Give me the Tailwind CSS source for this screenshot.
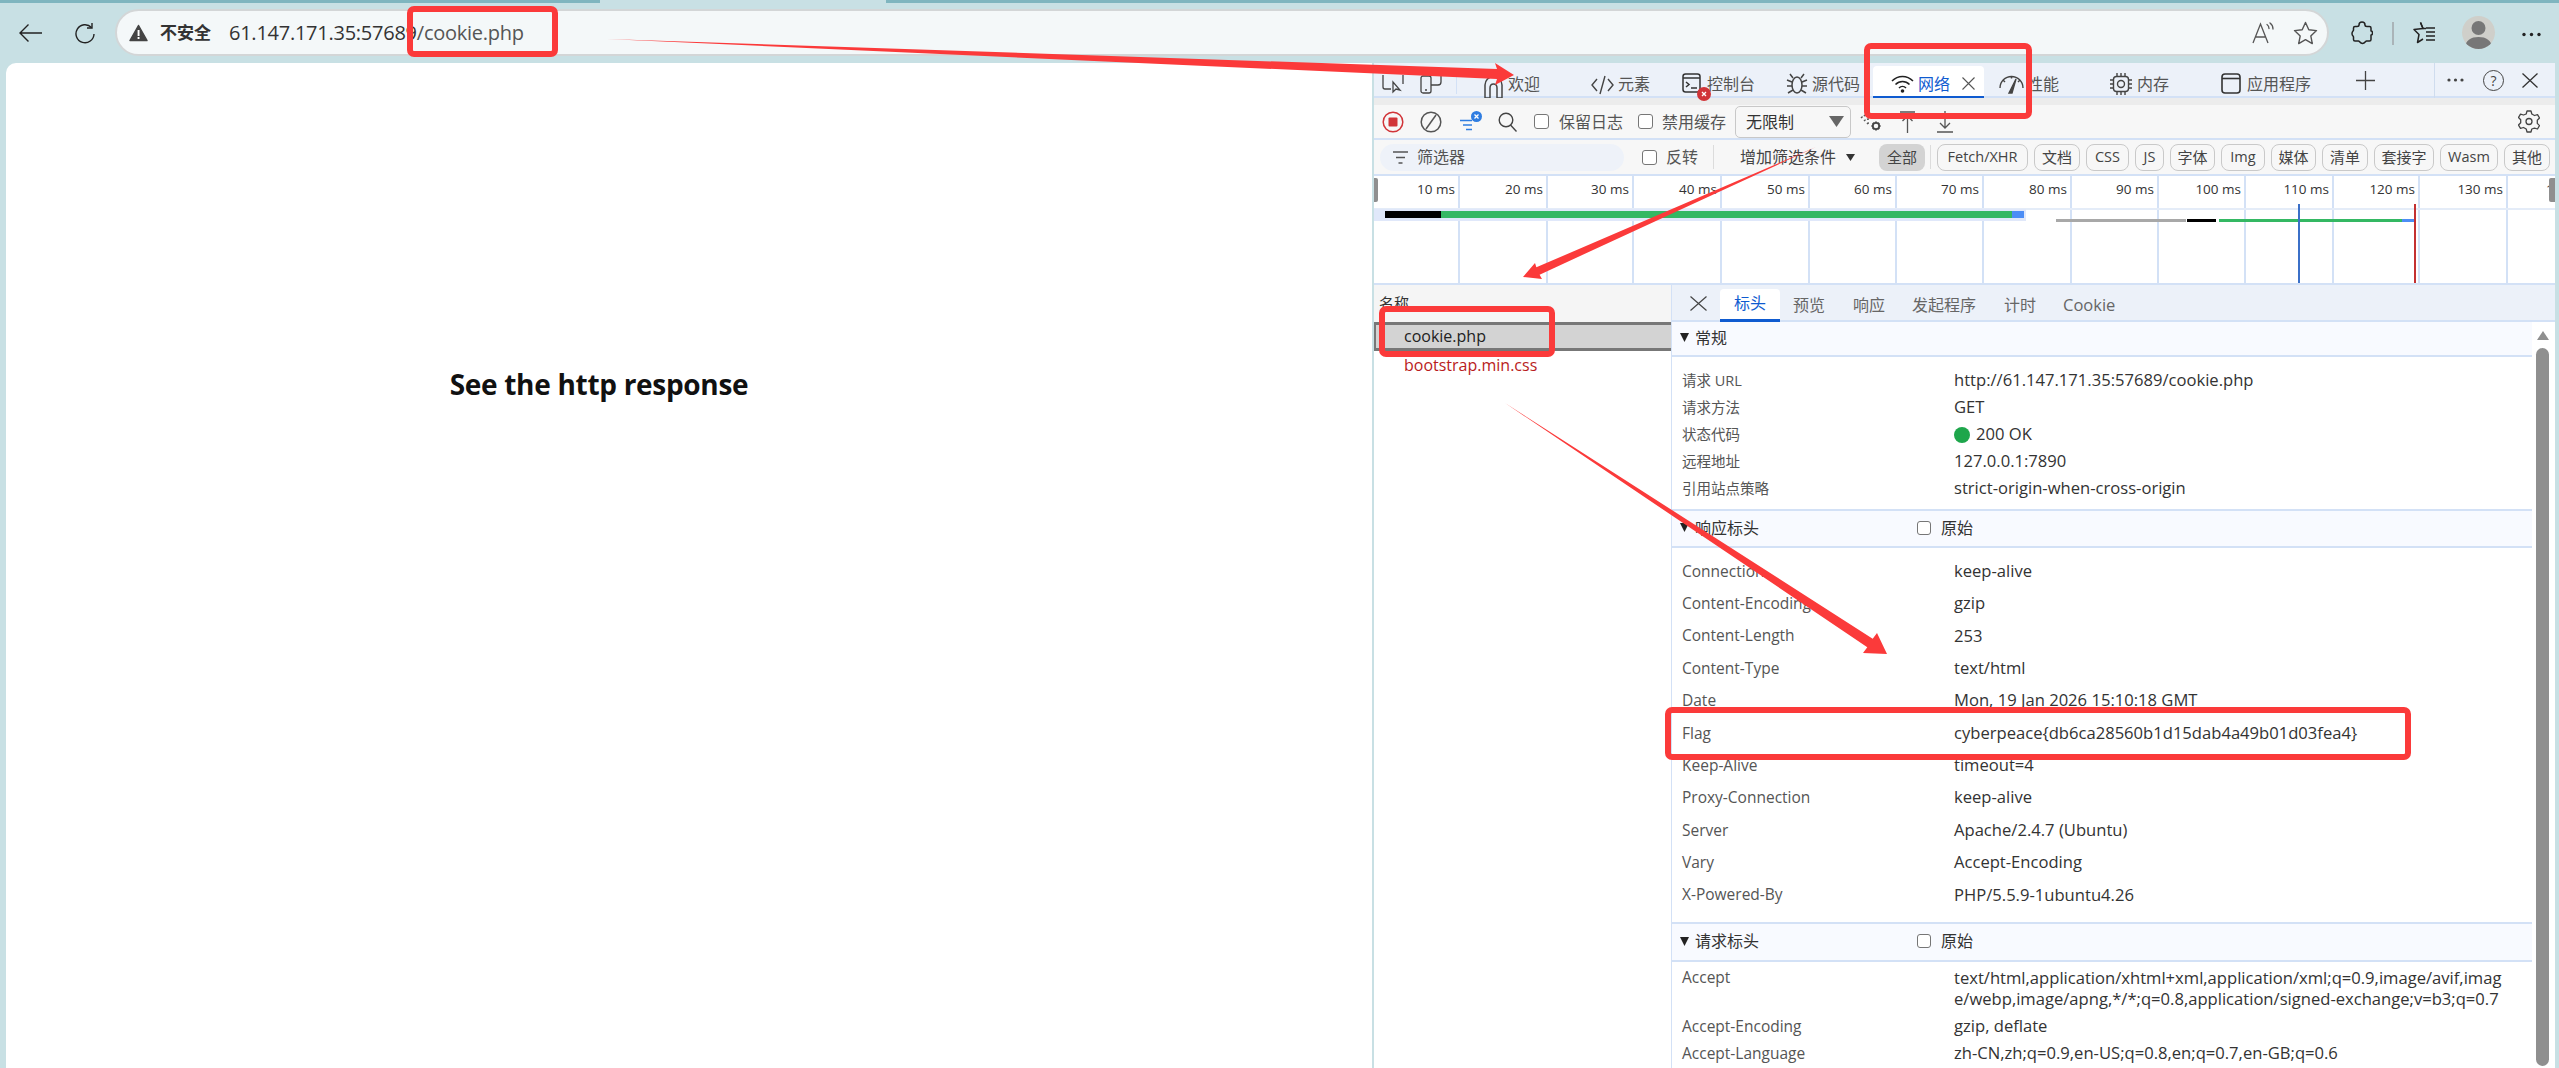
<!doctype html>
<html lang="zh-CN">
<head>
<meta charset="utf-8">
<title>cookie.php</title>
<script src="https://cdn.jsdelivr.net/npm/@tailwindcss/browser@4"></script>
</head>
<body class="m-0 overflow-hidden">
<div class="relative w-[2559px] h-[1068px] overflow-hidden flex flex-col bg-[#c8e0e4] font-['Open_Sans','Noto_Sans_CJK_SC',sans-serif] text-[#333]">

  <!-- browser chrome -->
  <div class="h-[3px] shrink-0 flex"><div class="w-[600px] bg-[#7fb5bf]"></div><div class="w-[286px]"></div><div class="flex-1 bg-[#7fb5bf]"></div></div>
  <div class="h-[60px] shrink-0 flex items-start">
    <button class="ml-[18px] mt-[20px] w-[24px] h-[20px]"><svg width="24" height="20" viewBox="0 0 24 20" fill="none" stroke="#222" stroke-width="1.4"><path d="M24 10H2M10.500 1.500 2 10l8.500 8.500"/></svg></button>
    <button class="ml-[32px] mt-[20px] w-[22px] h-[21px]"><svg width="22" height="21" viewBox="0 0 22 21" fill="none" stroke="#222" stroke-width="1.4"><path d="M17.500 4.500A9 9 0 1 0 20 11"/><path d="M18 0v5h-5"/></svg></button>
    <div class="ml-[19px] mt-[6px] w-[2214px] h-[47px] rounded-full bg-[#f4f8f9] border-2 border-[#d3d6d7] flex items-center">
      <svg class="ml-[12px]" width="19" height="18" viewBox="0 0 19 18"><path d="M9.500 1.500 18 16.500H1z" fill="#444" stroke="#444" stroke-width="1.500" stroke-linejoin="round"/><rect x="8.600" y="6" width="1.900" height="6" fill="#fff"/><rect x="8.600" y="13" width="1.900" height="2" fill="#fff"/></svg>
      <span class="ml-[12px] w-[52px] text-[17px] font-bold text-[#333] whitespace-nowrap">不安全</span>
      <span class="ml-[17px] text-[20px] tracking-[-0.25px] text-[#333] whitespace-nowrap">61.147.171.35:57689<span class="text-[#555]">/cookie.php</span></span>
      <svg class="ml-auto" width="24" height="22" viewBox="0 0 24 22" fill="none" stroke="#555" stroke-width="1.3"><path d="M1 21 8.500 2 16 21M3.500 15h10"/><path d="M15 2.500c1.500 1 2 2.500 2 4M18 1c2 1.500 3 3.500 3 6" stroke-linecap="round"/></svg>
      <svg class="ml-[17px] mr-[9px]" width="25" height="24" viewBox="0 0 25 24" fill="none" stroke="#555" stroke-width="1.400" stroke-linejoin="round"><path d="M12.500 1.500 15.800 8.700l7.700.9-5.700 5.300 1.500 7.700-6.800-3.900-6.800 3.900 1.500-7.700L1.500 9.600l7.700-.9z"/></svg>
    </div>
    <svg class="ml-[22px] mt-[18px]" width="22" height="24" viewBox="0 0 22 24" fill="none" stroke="#222" stroke-width="1.500" stroke-linejoin="round"><path d="M8 4c0-4 6-4 6 0 0 1 1 1.500 2 1.500h2.500c1 0 1.500.8 1.500 1.500v3c1.500 0 1.500 1 1.500 2s0 2-1.500 2v4.500c0 1-.5 1.500-1.500 1.500h-3c-1 0-1.500 2.500-4 2.500s-3-2.500-4-2.500H4c-1 0-1.500-.5-1.500-1.500v-2.500c0-1-1.500-1-1.500-3.500s1.500-2.500 1.500-3.500V7c0-1 .5-1.500 1.500-1.500h2C7 5.500 8 5 8 4z"/></svg>
    <div class="ml-[19px] mt-[19px] w-[2px] h-[23px] bg-[#aab4b8]"></div>
    <svg class="ml-[18px] mt-[18px]" width="24" height="24" viewBox="0 0 24 24" fill="none" stroke="#222" stroke-width="1.500" stroke-linejoin="round"><path d="M8.500 1.500 11 7.500l-9 1 5 5-1.500 8 5.500-3.500"/><path d="M8.500 1.500 11 7.500h3M14 11h9M14 15h9M14 19h9M14 7h9"/></svg>
    <div class="ml-[26px] mt-[13px] w-[33px] h-[33px] rounded-full bg-[#cfcfca] overflow-hidden flex justify-center"><svg width="33" height="33" viewBox="0 0 33 33"><circle cx="16.500" cy="12" r="7" fill="#777"/><path d="M3 33c0-9 6-12 13.500-12S30 24 30 33z" fill="#777"/></svg></div>
    <svg class="ml-[27px] mt-[29px]" width="19" height="5" viewBox="0 0 19 5" fill="#222"><circle cx="2" cy="2.500" r="1.700"/><circle cx="9.500" cy="2.500" r="1.700"/><circle cx="17" cy="2.500" r="1.700"/></svg>
  </div>

  <!-- body -->
  <div class="flex-1 flex pl-[6px] pr-[4px] min-h-0">
    <!-- page -->
    <main class="w-[1366px] bg-white rounded-tl-[10px] flex justify-center pt-[302px]">
      <h1 class="ml-[-180px] text-[28px] leading-[38px] h-[38px] font-bold text-[#111] tracking-[-0.3px] whitespace-nowrap">See the http response</h1>
    </main>
    <div class="w-[2px]"></div>

    <!-- devtools -->
    <section class="w-[1181px] bg-white flex flex-col min-h-0">
      <!-- tabs -->
      <div class="h-[35px] shrink-0 flex items-start bg-[#ecf1f9] border-b-2 border-[#d3e1f6] text-[16px] text-[#555]">
        <svg class="ml-[8px] mt-[11px]" width="22" height="20" viewBox="0 0 22 20" fill="none" stroke="#444" stroke-width="1.300"><path d="M1 1v12q0 2 2 2h6M21 1v9"/><path d="M11 8v10l3-3 4 1z"/></svg>
        <svg class="ml-[16px] mt-[11px]" width="22" height="20" viewBox="0 0 22 20" fill="none" stroke="#444" stroke-width="1.300"><rect x="1" y="2" width="10" height="17" rx="2"/><path d="M11 11h7q3 0 3-3V2M5 16h2"/></svg>
        <div class="ml-[14px] w-px h-[20px] mt-[11px] bg-[#d3e1f6]"></div>
        <svg class="ml-[26px] mt-[13px]" width="21" height="22" viewBox="0 0 21 22" fill="none" stroke="#444" stroke-width="1.500"><path d="M2 22V9a8.500 8.500 0 0 1 17 0v13h-5V12q0-4-3.500-4T7 12v10z"/></svg>
        <span class="ml-[4px] w-[32px] mt-[9px] leading-[24px] whitespace-nowrap">欢迎</span>
        <svg class="ml-[51px] mt-[12px]" width="23" height="20" viewBox="0 0 23 20" fill="none" stroke="#444" stroke-width="1.400"><path d="M6 4 1 10l5 6M17 4l5 6-5 6M14 1 9 19"/></svg>
        <span class="ml-[4px] w-[32px] mt-[9px] leading-[24px] whitespace-nowrap">元素</span>
        <div class="relative ml-[32px] mt-[10px] w-[19px] h-[20px]">
          <svg width="19" height="20" viewBox="0 0 19 20" fill="none" stroke="#333" stroke-width="1.500"><rect x="1" y="1" width="17" height="18" rx="2.500"/><path d="M1 5h17"/><path d="M4 9l3 2.500L4 14M9 15h6"/></svg>
          <svg class="absolute left-[15px] top-[14px]" width="14" height="14" viewBox="0 0 14 14"><circle cx="7" cy="7" r="7" fill="#d13438"/><path d="M5 5l4 4M9 5l-4 4" stroke="#fff" stroke-width="1.300"/></svg>
        </div>
        <span class="ml-[6px] w-[48px] mt-[9px] leading-[24px] whitespace-nowrap">控制台</span>
        <svg class="ml-[31px] mt-[10px]" width="22" height="21" viewBox="0 0 22 21" fill="none" stroke="#444" stroke-width="1.500"><ellipse cx="11" cy="12" rx="5" ry="8"/><path d="M7 5 4 1M15 5l3-4M6 9 1 7M16 9l5-2M6 13H1M16 13h5M7 17l-5 3M15 17l5 3"/></svg>
        <span class="ml-[4px] w-[48px] mt-[9px] leading-[24px] whitespace-nowrap">源代码</span>
        <div class="ml-[13px] mt-[3px] w-[111px] h-[34px] bg-white rounded-t-[4px] border-b-4 border-[#0f5bd0] flex items-start text-[#0f5bd0]">
          <svg class="ml-[18px] mt-[8px]" width="23" height="20" viewBox="0 0 23 20" fill="none" stroke="#222" stroke-width="1.600"><path d="M1 7c6-6 15-6 21 0M4.500 10.500c4-4 10-4 14 0M8 14c2-2 5-2 7 0"/><circle cx="11.500" cy="17" r="1.800" fill="#222" stroke="none"/></svg>
          <span class="ml-[4px] w-[32px] mt-[6px] leading-[24px] whitespace-nowrap">网络</span>
          <svg class="ml-[12px] mt-[11px]" width="13" height="13" viewBox="0 0 13 13" stroke="#555" stroke-width="1.100"><path d="M.5.500l12 12M12.500.500l-12 12"/></svg>
        </div>
        <svg class="ml-[15px] mt-[12px]" width="25" height="19" viewBox="0 0 25 19" fill="none" stroke="#444" stroke-width="1.400"><path d="M1 13a11.500 11.500 0 0 1 23 0M4 5l2 2M12.500 1.500v2M21 5l-2 2"/><path d="M10 18 17 4l-4 14z" fill="#444"/></svg>
        <span class="ml-[3px] w-[32px] mt-[9px] leading-[24px] whitespace-nowrap">性能</span>
        <svg class="ml-[51px] mt-[10px]" width="22" height="22" viewBox="0 0 22 22" fill="none" stroke="#444" stroke-width="1.400"><rect x="3.500" y="3.500" width="15" height="15" rx="3"/><circle cx="11" cy="11" r="3.500"/><path d="M7 0v3M11 0v3M15 0v3M7 19v3M11 19v3M15 19v3M0 7h3M0 11h3M0 15h3M19 7h3M19 11h3M19 15h3"/></svg>
        <span class="ml-[5px] w-[32px] mt-[9px] leading-[24px] whitespace-nowrap">内存</span>
        <svg class="ml-[52px] mt-[10px]" width="20" height="21" viewBox="0 0 20 21" fill="none" stroke="#333" stroke-width="1.600"><rect x="1" y="1" width="18" height="19" rx="3"/><path d="M1 5.500h18"/></svg>
        <span class="ml-[6px] w-[64px] mt-[9px] leading-[24px] whitespace-nowrap">应用程序</span>
        <svg class="ml-[45px] mt-[8px]" width="19" height="19" viewBox="0 0 19 19" stroke="#444" stroke-width="1.300"><path d="M9.500 0v19M0 9.500h19"/></svg>
        <div class="ml-[59px] w-px h-[35px] bg-[#cfdcee]"></div>
        <svg class="ml-[12px] mt-[15px]" width="17" height="4" viewBox="0 0 17 4" fill="#444"><circle cx="2" cy="2" r="1.600"/><circle cx="8.500" cy="2" r="1.600"/><circle cx="15" cy="2" r="1.600"/></svg>
        <div class="ml-[19px] mt-[7px] w-[21px] h-[21px] rounded-full border border-[#444] flex items-center justify-center text-[14px] leading-none text-[#444]">?</div>
        <svg class="ml-[18px] mt-[10px]" width="16" height="15" viewBox="0 0 16 15" stroke="#333" stroke-width="1.300"><path d="M.500.500l15 14M15.500.500l-15 14"/></svg>
      </div>
      <div class="h-[7px] shrink-0 bg-[#ececec]"></div>

      <!-- toolbar -->
      <div class="h-[35px] shrink-0 flex items-center bg-[#f7f7f7] border-b-2 border-[#d3e1f6] text-[16px] text-[#555]">
        <svg class="ml-[8px]" width="22" height="22" viewBox="0 0 22 22"><circle cx="11" cy="11" r="9.800" fill="none" stroke="#d13438" stroke-width="1.500"/><rect x="6.500" y="6.500" width="9" height="9" rx="1" fill="#d13438"/></svg>
        <svg class="ml-[16px]" width="22" height="22" viewBox="0 0 22 22" fill="none" stroke="#555" stroke-width="1.500"><circle cx="11" cy="11" r="9.800"/><path d="M16 4 6 18"/></svg>
        <svg class="ml-[18px]" width="22" height="22" viewBox="0 0 22 22" fill="none"><path d="M0 9.500h12M3 14h9M6 18.500h6" stroke="#2f7de1" stroke-width="1.700"/><circle cx="16.500" cy="5.500" r="5.500" fill="#2f7de1"/><path d="M14.500 3.500l4 4M18.500 3.500l-4 4" stroke="#fff" stroke-width="1.300"/></svg>
        <svg class="ml-[16px]" width="19" height="20" viewBox="0 0 19 20" fill="none" stroke="#444" stroke-width="1.400"><circle cx="8" cy="8" r="6.800"/><path d="M12.500 13l6 6.500"/></svg>
        <span class="ml-[17px] w-[15px] h-[15px] rounded-[3px] border border-[#767676] bg-white"></span>
        <span class="ml-[10px] w-[64px] whitespace-nowrap">保留日志</span>
        <span class="ml-[15px] w-[15px] h-[15px] rounded-[3px] border border-[#767676] bg-white"></span>
        <span class="ml-[9px] w-[65px] whitespace-nowrap">禁用缓存</span>
        <div class="ml-[8px] w-[116px] h-[32px] rounded-[5px] border border-[#c8c8c8] flex items-center text-[#333]">
          <span class="ml-[10px] whitespace-nowrap">无限制</span>
          <svg class="ml-auto mr-[6px]" width="15" height="11" viewBox="0 0 15 11"><path d="M0 0h15L7.500 11z" fill="#666"/></svg>
        </div>
        <svg class="ml-[9px]" width="22" height="22" viewBox="0 0 22 22" fill="none"><path d="M1 7c2-2 4-3 7-3M4 10c1.500-1.500 3-2 5-2M7 13c1-1 2-1.500 3-1.500" stroke="#555" stroke-width="1.400" stroke-dasharray="2 1.500"/><path d="M16 10.500v9M11.500 15h9M12.800 11.800l6.400 6.400M19.200 11.800l-6.400 6.400" stroke="#444" stroke-width="1.800"/><circle cx="16" cy="15" r="3.200" fill="#f7f7f7" stroke="#444" stroke-width="1.800"/></svg>
        <svg class="ml-[18px]" width="15" height="22" viewBox="0 0 15 22" fill="none" stroke="#555" stroke-width="1.300"><path d="M0 1h15M7.500 22V5M2.500 10l5-5 5 5"/></svg>
        <svg class="ml-[22px]" width="16" height="22" viewBox="0 0 16 22" fill="none" stroke="#555" stroke-width="1.300"><path d="M0 21h16M8 0v17M3 12l5 5 5-5"/></svg>
        <svg class="ml-auto mr-[15px]" width="22" height="23" viewBox="0 0 22 23" fill="none" stroke="#444" stroke-width="1.300" stroke-linejoin="round"><circle cx="11" cy="11.500" r="3"/><path d="M9 1h4l.8 3 2.700 1.500 3-.9 2 3.400-2.200 2.200v3.200l2.200 2.200-2 3.400-3-.9L13.800 19l-.8 3H9l-.8-3-2.700-1.500-3 .9-2-3.400 2.200-2.200V9.700L.5 7.500l2-3.400 3 .9L8.200 4z"/></svg>
      </div>

      <!-- filter -->
      <div class="h-[36px] shrink-0 flex items-center bg-[#f7f7f7] border-b-2 border-[#d3e1f6] text-[15px] text-[#444]">
        <div class="ml-[6px] w-[244px] h-[27px] rounded-full bg-[#eef2f9] flex items-center text-[16px] text-[#555]">
          <svg class="ml-[13px]" width="15" height="13" viewBox="0 0 15 13" stroke="#555" stroke-width="1.500"><path d="M0 1h15M3 6.500h9M5.500 12h4"/></svg>
          <span class="ml-[9px] whitespace-nowrap">筛选器</span>
        </div>
        <span class="ml-[18px] w-[15px] h-[15px] rounded-[3px] border border-[#767676] bg-white"></span>
        <span class="ml-[9px] w-[32px] text-[16px] whitespace-nowrap text-[#555]">反转</span>
        <div class="ml-[15px] w-px h-[24px] bg-[#dcdcdc]"></div>
        <span class="ml-[26px] w-[96px] text-[16px] whitespace-nowrap">增加筛选条件</span>
        <svg class="ml-[10px]" width="9" height="7" viewBox="0 0 9 7"><path d="M0 0h9L4.500 7z" fill="#333"/></svg>
        <span class="ml-[24px] w-[46px] h-[27px] rounded-[8px] bg-[#d3d3d3] flex items-center justify-center whitespace-nowrap">全部</span>
        <div class="ml-[5px] w-px h-[24px] bg-[#dcdcdc]"></div>
        <div class="ml-[6px] flex gap-[6px]">
          <span class="w-[91px] h-[27px] rounded-[8px] border border-[#c9c9c9] flex items-center justify-center text-[14.5px] whitespace-nowrap">Fetch/XHR</span>
          <span class="w-[46px] h-[27px] rounded-[8px] border border-[#c9c9c9] flex items-center justify-center whitespace-nowrap">文档</span>
          <span class="w-[43px] h-[27px] rounded-[8px] border border-[#c9c9c9] flex items-center justify-center text-[14.5px] whitespace-nowrap">CSS</span>
          <span class="w-[29px] h-[27px] rounded-[8px] border border-[#c9c9c9] flex items-center justify-center text-[14.5px] whitespace-nowrap">JS</span>
          <span class="w-[45px] h-[27px] rounded-[8px] border border-[#c9c9c9] flex items-center justify-center whitespace-nowrap">字体</span>
          <span class="w-[44px] h-[27px] rounded-[8px] border border-[#c9c9c9] flex items-center justify-center text-[14.5px] whitespace-nowrap">Img</span>
          <span class="w-[45px] h-[27px] rounded-[8px] border border-[#c9c9c9] flex items-center justify-center whitespace-nowrap">媒体</span>
          <span class="w-[46px] h-[27px] rounded-[8px] border border-[#c9c9c9] flex items-center justify-center whitespace-nowrap">清单</span>
          <span class="w-[60px] h-[27px] rounded-[8px] border border-[#c9c9c9] flex items-center justify-center whitespace-nowrap">套接字</span>
          <span class="w-[58px] h-[27px] rounded-[8px] border border-[#c9c9c9] flex items-center justify-center text-[14.5px] whitespace-nowrap">Wasm</span>
          <span class="w-[46px] h-[27px] rounded-[8px] border border-[#c9c9c9] flex items-center justify-center whitespace-nowrap">其他</span>
        </div>
      </div>

      <!-- timeline -->
      <div class="relative h-[109px] shrink-0 bg-white border-b-2 border-[#d3e1f6] overflow-hidden">
        <div class="flex h-full text-[13.5px] text-[#333]">
          <div class="w-[86px] border-r-2 border-[#d3e1f6] text-right pr-[3px] pt-[3px] whitespace-nowrap">10 ms</div>
          <div class="w-[88px] border-r-2 border-[#d3e1f6] text-right pr-[3px] pt-[3px] whitespace-nowrap">20 ms</div>
          <div class="w-[86px] border-r-2 border-[#d3e1f6] text-right pr-[3px] pt-[3px] whitespace-nowrap">30 ms</div>
          <div class="w-[88px] border-r-2 border-[#d3e1f6] text-right pr-[3px] pt-[3px] whitespace-nowrap">40 ms</div>
          <div class="w-[88px] border-r-2 border-[#d3e1f6] text-right pr-[3px] pt-[3px] whitespace-nowrap">50 ms</div>
          <div class="w-[87px] border-r-2 border-[#d3e1f6] text-right pr-[3px] pt-[3px] whitespace-nowrap">60 ms</div>
          <div class="w-[87px] border-r-2 border-[#d3e1f6] text-right pr-[3px] pt-[3px] whitespace-nowrap">70 ms</div>
          <div class="w-[88px] border-r-2 border-[#d3e1f6] text-right pr-[3px] pt-[3px] whitespace-nowrap">80 ms</div>
          <div class="w-[87px] border-r-2 border-[#d3e1f6] text-right pr-[3px] pt-[3px] whitespace-nowrap">90 ms</div>
          <div class="w-[87px] border-r-2 border-[#d3e1f6] text-right pr-[3px] pt-[3px] whitespace-nowrap">100 ms</div>
          <div class="w-[88px] border-r-2 border-[#d3e1f6] text-right pr-[3px] pt-[3px] whitespace-nowrap">110 ms</div>
          <div class="w-[86px] border-r-2 border-[#d3e1f6] text-right pr-[3px] pt-[3px] whitespace-nowrap">120 ms</div>
          <div class="w-[88px] border-r-2 border-[#d3e1f6] text-right pr-[3px] pt-[3px] whitespace-nowrap">130 ms</div>
          <div class="w-[45px] pl-[38px] pt-[3px] whitespace-nowrap overflow-hidden">140 ms</div>
        </div>
        <div class="absolute left-0 right-0 top-[32px] h-[2px] bg-[#e4ecf8]"></div>
        <div class="absolute left-0 top-[2px] w-[4px] h-[24px] rounded-r-[2px] bg-[#8f8f8f]"></div>
        <div class="absolute right-0 top-[2px] w-[6px] h-[24px] rounded-l-[2px] bg-[#8f8f8f]"></div>
        <div class="absolute left-0 top-[33px] w-[652px] h-[12px] bg-[#e0e8fa]"></div>
        <div class="absolute left-[11px] top-[35px] w-[56px] h-[7px] bg-black"></div>
        <div class="absolute left-[67px] top-[35px] w-[571px] h-[7px] bg-[#34b863]"></div>
        <div class="absolute left-[638px] top-[35px] w-[12px] h-[7px] bg-[#4c8df5]"></div>
        <div class="absolute left-[682px] top-[43px] w-[130px] h-[3px] bg-[#a8a8a8]"></div>
        <div class="absolute left-[813px] top-[43px] w-[29px] h-[3px] bg-black"></div>
        <div class="absolute left-[845px] top-[43px] w-[183px] h-[3px] bg-[#34b863]"></div>
        <div class="absolute left-[1028px] top-[43px] w-[12px] h-[3px] bg-[#4c8df5]"></div>
        <div class="absolute left-[924px] top-[28px] w-[2px] h-[81px] bg-[#3b70c8]"></div>
        <div class="absolute left-[1040px] top-[28px] w-[2px] h-[81px] bg-[#c43030]"></div>
      </div>

      <!-- panes -->
      <div class="flex-1 flex min-h-0">
        <div class="w-[297px] shrink-0 flex flex-col bg-white">
          <div class="h-[37px] shrink-0 bg-[#f5f5f5] pl-[5px] pt-[6px] text-[15px] leading-[24px] text-[#333]">名称</div>
          <div class="h-[29px] shrink-0 bg-[#d3d3d3] border-y-[3px] border-[#777] border-l-[2px] pl-[28px] text-[16px] leading-[23px] text-[#222] whitespace-nowrap">cookie.php</div>
          <div class="h-[29px] shrink-0 pl-[30px] text-[16px] leading-[29px] text-[#b91c1c] whitespace-nowrap">bootstrap.min.css</div>
        </div>
        <div class="flex-1 flex flex-col min-w-0 border-l border-[#d3e1f6]">
          <div class="h-[37px] shrink-0 flex items-start bg-[#ecf1f9] border-b-2 border-[#d3e1f6] text-[16px] text-[#666]">
            <svg class="ml-[18px] mt-[11px]" width="17" height="15" viewBox="0 0 17 15" stroke="#444" stroke-width="1.200"><path d="M.500.500l16 14M16.500.500l-16 14"/></svg>
            <div class="ml-[13px] mt-[4px] w-[60px] h-[33px] bg-white rounded-t-[4px] border-b-[3px] border-[#0f5bd0] text-center text-[#0f5bd0] leading-[28px]">标头</div>
            <span class="ml-[13px] w-[32px] mt-[8px] leading-[24px] whitespace-nowrap">预览</span>
            <span class="ml-[28px] w-[32px] mt-[8px] leading-[24px] whitespace-nowrap">响应</span>
            <span class="ml-[27px] w-[64px] mt-[8px] leading-[24px] whitespace-nowrap">发起程序</span>
            <span class="ml-[28px] w-[32px] mt-[8px] leading-[24px] whitespace-nowrap">计时</span>
            <span class="ml-[27px] mt-[8px] leading-[24px] text-[16.5px] whitespace-nowrap">Cookie</span>
          </div>
          <div class="flex-1 flex min-h-0">
            <div class="w-[860px] shrink-0 overflow-hidden text-[16.6px] text-[#333]">

              <div class="h-[35px] bg-[#f8faff] border-b-2 border-[#d3e1f6] flex items-center pb-[2px] text-[16px]">
                <svg class="ml-[8px]" width="9" height="9" viewBox="0 0 9 9"><path d="M0 0h9L4.500 9z" fill="#222"/></svg>
                <span class="ml-[6px] whitespace-nowrap">常规</span>
              </div>
              <div class="h-[10px]"></div>
              <div class="h-[27px] flex items-center"><span class="ml-[10px] w-[272px] text-[#555] text-[14.5px] whitespace-nowrap">请求 URL</span><span class="whitespace-nowrap">http://61.147.171.35:57689/cookie.php</span></div>
              <div class="h-[27px] flex items-center"><span class="ml-[10px] w-[272px] text-[#555] text-[14.5px] whitespace-nowrap">请求方法</span><span class="whitespace-nowrap">GET</span></div>
              <div class="h-[27px] flex items-center"><span class="ml-[10px] w-[272px] text-[#555] text-[14.5px] whitespace-nowrap">状态代码</span><span class="w-[16px] h-[16px] rounded-full bg-[#1ea64b] mr-[6px]"></span><span class="whitespace-nowrap">200 OK</span></div>
              <div class="h-[27px] flex items-center"><span class="ml-[10px] w-[272px] text-[#555] text-[14.5px] whitespace-nowrap">远程地址</span><span class="whitespace-nowrap">127.0.0.1:7890</span></div>
              <div class="h-[27px] flex items-center"><span class="ml-[10px] w-[272px] text-[#555] text-[14.5px] whitespace-nowrap">引用站点策略</span><span class="whitespace-nowrap">strict-origin-when-cross-origin</span></div>
              <div class="h-[7px]"></div>

              <div class="h-[39px] bg-[#f8faff] border-y-2 border-[#d3e1f6] flex items-center pb-[2px] text-[16px]">
                <svg class="ml-[8px]" width="9" height="9" viewBox="0 0 9 9"><path d="M0 0h9L4.500 9z" fill="#222"/></svg>
                <span class="ml-[6px] w-[222px] whitespace-nowrap">响应标头</span>
                <span class="w-[14px] h-[14px] rounded-[3px] border border-[#767676] bg-white"></span>
                <span class="ml-[10px] whitespace-nowrap">原始</span>
              </div>
              <div class="h-[7px]"></div>
              <div class="h-[32.4px] flex items-center"><span class="ml-[10px] w-[272px] text-[#555] text-[15.5px] whitespace-nowrap">Connection</span><span class="whitespace-nowrap">keep-alive</span></div>
              <div class="h-[32.4px] flex items-center"><span class="ml-[10px] w-[272px] text-[#555] text-[15.5px] whitespace-nowrap">Content-Encoding</span><span class="whitespace-nowrap">gzip</span></div>
              <div class="h-[32.4px] flex items-center"><span class="ml-[10px] w-[272px] text-[#555] text-[15.5px] whitespace-nowrap">Content-Length</span><span class="whitespace-nowrap">253</span></div>
              <div class="h-[32.4px] flex items-center"><span class="ml-[10px] w-[272px] text-[#555] text-[15.5px] whitespace-nowrap">Content-Type</span><span class="whitespace-nowrap">text/html</span></div>
              <div class="h-[32.4px] flex items-center"><span class="ml-[10px] w-[272px] text-[#555] text-[15.5px] whitespace-nowrap">Date</span><span class="whitespace-nowrap">Mon, 19 Jan 2026 15:10:18 GMT</span></div>
              <div class="h-[32.4px] flex items-center"><span class="ml-[10px] w-[272px] text-[#555] text-[15.5px] whitespace-nowrap">Flag</span><span class="whitespace-nowrap">cyberpeace{db6ca28560b1d15dab4a49b01d03fea4}</span></div>
              <div class="h-[32.4px] flex items-center"><span class="ml-[10px] w-[272px] text-[#555] text-[15.5px] whitespace-nowrap">Keep-Alive</span><span class="whitespace-nowrap">timeout=4</span></div>
              <div class="h-[32.4px] flex items-center"><span class="ml-[10px] w-[272px] text-[#555] text-[15.5px] whitespace-nowrap">Proxy-Connection</span><span class="whitespace-nowrap">keep-alive</span></div>
              <div class="h-[32.4px] flex items-center"><span class="ml-[10px] w-[272px] text-[#555] text-[15.5px] whitespace-nowrap">Server</span><span class="whitespace-nowrap">Apache/2.4.7 (Ubuntu)</span></div>
              <div class="h-[32.4px] flex items-center"><span class="ml-[10px] w-[272px] text-[#555] text-[15.5px] whitespace-nowrap">Vary</span><span class="whitespace-nowrap">Accept-Encoding</span></div>
              <div class="h-[32.4px] flex items-center"><span class="ml-[10px] w-[272px] text-[#555] text-[15.5px] whitespace-nowrap">X-Powered-By</span><span class="whitespace-nowrap">PHP/5.5.9-1ubuntu4.26</span></div>
              <div class="h-[11px]"></div>

              <div class="h-[40px] bg-[#f8faff] border-y-2 border-[#d3e1f6] flex items-center pb-[2px] text-[16px]">
                <svg class="ml-[8px]" width="9" height="9" viewBox="0 0 9 9"><path d="M0 0h9L4.500 9z" fill="#222"/></svg>
                <span class="ml-[6px] w-[222px] whitespace-nowrap">请求标头</span>
                <span class="w-[14px] h-[14px] rounded-[3px] border border-[#767676] bg-white"></span>
                <span class="ml-[10px] whitespace-nowrap">原始</span>
              </div>
              <div class="flex pt-[5px] leading-[21px]"><span class="ml-[10px] w-[272px] shrink-0 text-[#555] text-[15.5px] whitespace-nowrap">Accept</span><span class="w-[570px] whitespace-nowrap">text/html,application/xhtml+xml,application/xml;q=0.9,image/avif,imag<br>e/webp,image/apng,*/*;q=0.8,application/signed-exchange;v=b3;q=0.7</span></div>
              <div class="h-[27px] flex items-center mt-[4px]"><span class="ml-[10px] w-[272px] text-[#555] text-[15.5px] whitespace-nowrap">Accept-Encoding</span><span class="whitespace-nowrap">gzip, deflate</span></div>
              <div class="h-[27px] flex items-center"><span class="ml-[10px] w-[272px] text-[#555] text-[15.5px] whitespace-nowrap">Accept-Language</span><span class="whitespace-nowrap">zh-CN,zh;q=0.9,en-US;q=0.8,en;q=0.7,en-GB;q=0.6</span></div>
            </div>
            <!-- scrollbar -->
            <div class="w-[23px] shrink-0 bg-white flex flex-col items-center pr-[2px] pt-[9px]">
              <svg width="12" height="9" viewBox="0 0 12 9"><path d="M6 0l6 9H0z" fill="#8f8f8f"/></svg>
              <div class="mt-[8px] w-[13px] flex-1 rounded-full bg-[#8f8f8f] mb-[2px]"></div>
            </div>
          </div>
        </div>
      </div>
    </section>
  </div>

  <!-- annotations drawn over the screenshot -->
  <svg class="absolute inset-0 pointer-events-none" width="2559" height="1068" viewBox="0 0 2559 1068" fill="none">
    <g stroke="#fb3a3a" stroke-width="6">
      <rect x="410" y="9" width="145" height="45" rx="4"/>
      <rect x="1867" y="46" width="162" height="70" rx="4"/>
      <rect x="1382" y="309" width="170" height="45" rx="4"/>
      <rect x="1668" y="710" width="740" height="47" rx="4"/>
    </g>
    <g fill="#fb3a3a">
      <polygon points="607,39 1497,69 1495,63 1514,75 1495,85 1497,79"/>
      <polygon points="1816,147 1536.400,267.300 1535,263 1523,277 1542,279 1539.600,274.700"/>
      <polygon points="1505,403 1872.700,638.800 1877,633 1887,654 1863,653 1867.300,647.200"/>
    </g>
  </svg>
</div>
</body>
</html>
